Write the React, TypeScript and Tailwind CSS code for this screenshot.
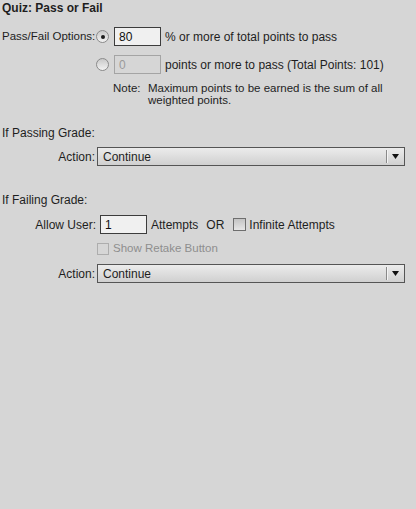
import React from "react"

function Radio({ checked }: { checked?: boolean }) {
  return (
    <span className="flex h-[13px] w-[13px] items-center justify-center rounded-full border border-[#8a8a8a] bg-gradient-to-b from-[#c9c9c9] to-[#f2f2f2]">
      {checked && <span className="h-[4px] w-[4px] rounded-full bg-[#1a1a1a]" />}
    </span>
  )
}

function Box({ disabled }: { disabled?: boolean }) {
  return (
    <span
      className={
        disabled
          ? "block h-[12px] w-[12px] border border-[#adadad] bg-[#d6d6d6]"
          : "block h-[13px] w-[13px] border border-[#6e6e6e] bg-gradient-to-b from-[#c4c4c4] to-[#e6e6e6]"
      }
    />
  )
}

function Field({ value, disabled }: { value: string; disabled?: boolean }) {
  return (
    <div
      className={
        disabled
          ? "flex h-[19px] w-[47px] items-center border border-[#a4a4a4] bg-[#d6d6d6] pl-[4px] text-[#9a9a9a]"
          : "flex h-[19px] w-[47px] items-center border border-[#3c3c3c] bg-[#f0f0f0] pl-[4px] text-[#111]"
      }
    >
      {value}
    </div>
  )
}

function Select({ value }: { value: string }) {
  return (
    <div className="flex h-[19px] w-[308px] items-center border border-[#555] bg-gradient-to-b from-[#ececec] to-[#d0d0d0]">
      <span className="flex-1 pl-[5px]">{value}</span>
      <span className="h-[13px] w-[1px] bg-[#8a8a8a] shadow-[1px_0_0_#f4f4f4]" />
      <span className="flex w-[17px] justify-center">
        <svg width="7" height="5" viewBox="0 0 7 5">
          <path d="M0 0h7L3.5 5z" fill="#111" />
        </svg>
      </span>
    </div>
  )
}

export default function App() {
  return (
    <div className="h-[509px] w-[416px] bg-[#d6d6d6] pl-[2px] font-['Liberation_Sans',Arial,sans-serif] text-[12px] text-[#1e1e1e]">
      <div className="h-[16px] leading-[16px] font-bold">Quiz: Pass or Fail</div>

      <div className="mt-[11px] flex h-[19px] items-center">
        <span className="w-[94px] whitespace-nowrap text-[11.5px]">Pass/Fail Options:</span>
        <Radio checked />
        <span className="ml-[5px]">
          <Field value="80" />
        </span>
        <span className="ml-[4px]">% or more of total points to pass</span>
      </div>

      <div className="mt-[9px] flex h-[19px] items-center">
        <span className="w-[94px]" />
        <Radio />
        <span className="ml-[5px]">
          <Field value="0" disabled />
        </span>
        <span className="ml-[4px]">points or more to pass (Total Points: 101)</span>
      </div>

      <div className="mt-[8px] flex pl-[111px] text-[11.5px] leading-[12px]">
        <span className="w-[35px]">Note:</span>
        <span className="w-[245px]">
          Maximum points to be earned is the sum of all weighted points.
        </span>
      </div>

      <div className="mt-[20px] h-[14px] leading-[14px]">If Passing Grade:</div>

      <div className="mt-[7px] flex h-[19px] items-center">
        <span className="w-[93px] text-right">Action:</span>
        <span className="ml-[2px]">
          <Select value="Continue" />
        </span>
      </div>

      <div className="mt-[27px] h-[14px] leading-[14px]">If Failing Grade:</div>

      <div className="mt-[8px] flex h-[19px] items-center">
        <span className="w-[94px] text-right">Allow User:</span>
        <span className="ml-[4px]">
          <Field value="1" />
        </span>
        <span className="ml-[4px]">Attempts</span>
        <span className="ml-[8px]">OR</span>
        <span className="ml-[9px]">
          <Box />
        </span>
        <span className="ml-[3px]">Infinite Attempts</span>
      </div>

      <div className="mt-[8px] flex h-[14px] items-center pl-[95px] text-[11.5px] text-[#8e8e8e]">
        <Box disabled />
        <span className="ml-[4px]">Show Retake Button</span>
      </div>

      <div className="mt-[8px] flex h-[19px] items-center">
        <span className="w-[93px] text-right">Action:</span>
        <span className="ml-[2px]">
          <Select value="Continue" />
        </span>
      </div>
    </div>
  )
}
